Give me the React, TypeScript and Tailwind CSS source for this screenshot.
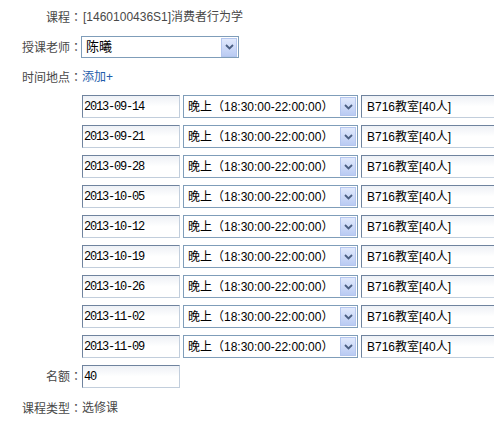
import React from 'react';

const dates = [
  '2013-09-14',
  '2013-09-21',
  '2013-09-28',
  '2013-10-05',
  '2013-10-12',
  '2013-10-19',
  '2013-10-26',
  '2013-11-02',
  '2013-11-09',
];

const font = { fontFamily: '"Liberation Sans", "Noto Sans CJK SC", sans-serif' };
const mono = { fontFamily: '"Liberation Mono", "Noto Sans CJK SC", monospace' };
const colonFont = { fontFamily: '"Noto Sans CJK TC", sans-serif' };

const Chevron = () => (
  <div className="ml-auto mr-[1px] flex h-[19px] w-[16px] shrink-0 items-center justify-center border border-[#b4c6ee] bg-gradient-to-b from-[#e1e9fc] to-[#bacbf3]">
    <svg width="9" height="6" viewBox="0 0 9 6">
      <path d="M1 1 L4.5 4.5 L8 1" fill="none" stroke="#4b5f82" strokeWidth="1.8" />
    </svg>
  </div>
);

const TextBox = ({ children, className = '' }: { children: React.ReactNode; className?: string }) => (
  <div
    className={`flex h-[23px] shrink-0 items-center border border-t-[#6f839e] border-l-[#6f839e] border-b-[#c2cedc] border-r-[#c2cedc] bg-gradient-to-b from-[#eef1f6] via-white to-white text-black ${className}`}
  >
    {children}
  </div>
);

const Label = ({ text }: { text: string }) => (
  <div className="w-[82px] shrink-0 text-right">
    {text}
    <span style={colonFont}>：</span>
  </div>
);

export default function App() {
  return (
    <div className="h-[424px] w-[494px] overflow-hidden bg-white text-[12px] text-[#484848]" style={font}>
      {/* 课程 */}
      <div className="mt-[9px] flex h-[16px] items-center leading-[16px]">
        <Label text="课程" />
        <span className="pl-[1px]">[1460100436S1]消费者行为学</span>
      </div>

      {/* 授课老师 */}
      <div className="mt-[11px] flex h-[22px] items-center">
        <Label text="授课老师" />
        <div className="-ml-[1px] flex h-[22px] w-[158px] shrink-0 items-center border border-[#7f9db9] bg-white pl-[4px] text-[13px] text-black">
          <span>陈曦</span>
          <Chevron />
        </div>
      </div>

      {/* 时间地点 */}
      <div className="mt-[11px] flex h-[16px] items-center leading-[16px]">
        <Label text="时间地点" />
        <span className="text-[#1f5dab]">添加+</span>
      </div>

      <div className="mt-[10px] flex flex-col gap-[7px] pl-[82px]">
        {dates.map((d) => (
          <div key={d} className="flex gap-[3px]">
            <TextBox className="w-[98px] pl-[1px]">
              <span className="text-[12px] tracking-[-1.2px]" style={mono}>
                {d}
              </span>
            </TextBox>
            <div className="flex h-[23px] w-[175px] shrink-0 items-center border border-[#7f9db9] bg-white pl-[4px] text-[12px] text-black">
              <span className="whitespace-nowrap">晚上（18:30:00-22:00:00）</span>
              <Chevron />
            </div>
            <TextBox className="w-[150px] pl-[5px]">
              <span className="whitespace-nowrap">B716教室[40人]</span>
            </TextBox>
          </div>
        ))}
      </div>

      {/* 名额 */}
      <div className="mt-[7px] flex h-[23px] items-center">
        <Label text="名额" />
        <TextBox className="w-[98px] pl-[1px]">
          <span className="text-[12px] tracking-[-1.2px]" style={mono}>
            40
          </span>
        </TextBox>
      </div>

      {/* 课程类型 */}
      <div className="mt-[12px] flex h-[16px] items-center leading-[16px]">
        <Label text="课程类型" />
        <span>选修课</span>
      </div>
    </div>
  );
}
